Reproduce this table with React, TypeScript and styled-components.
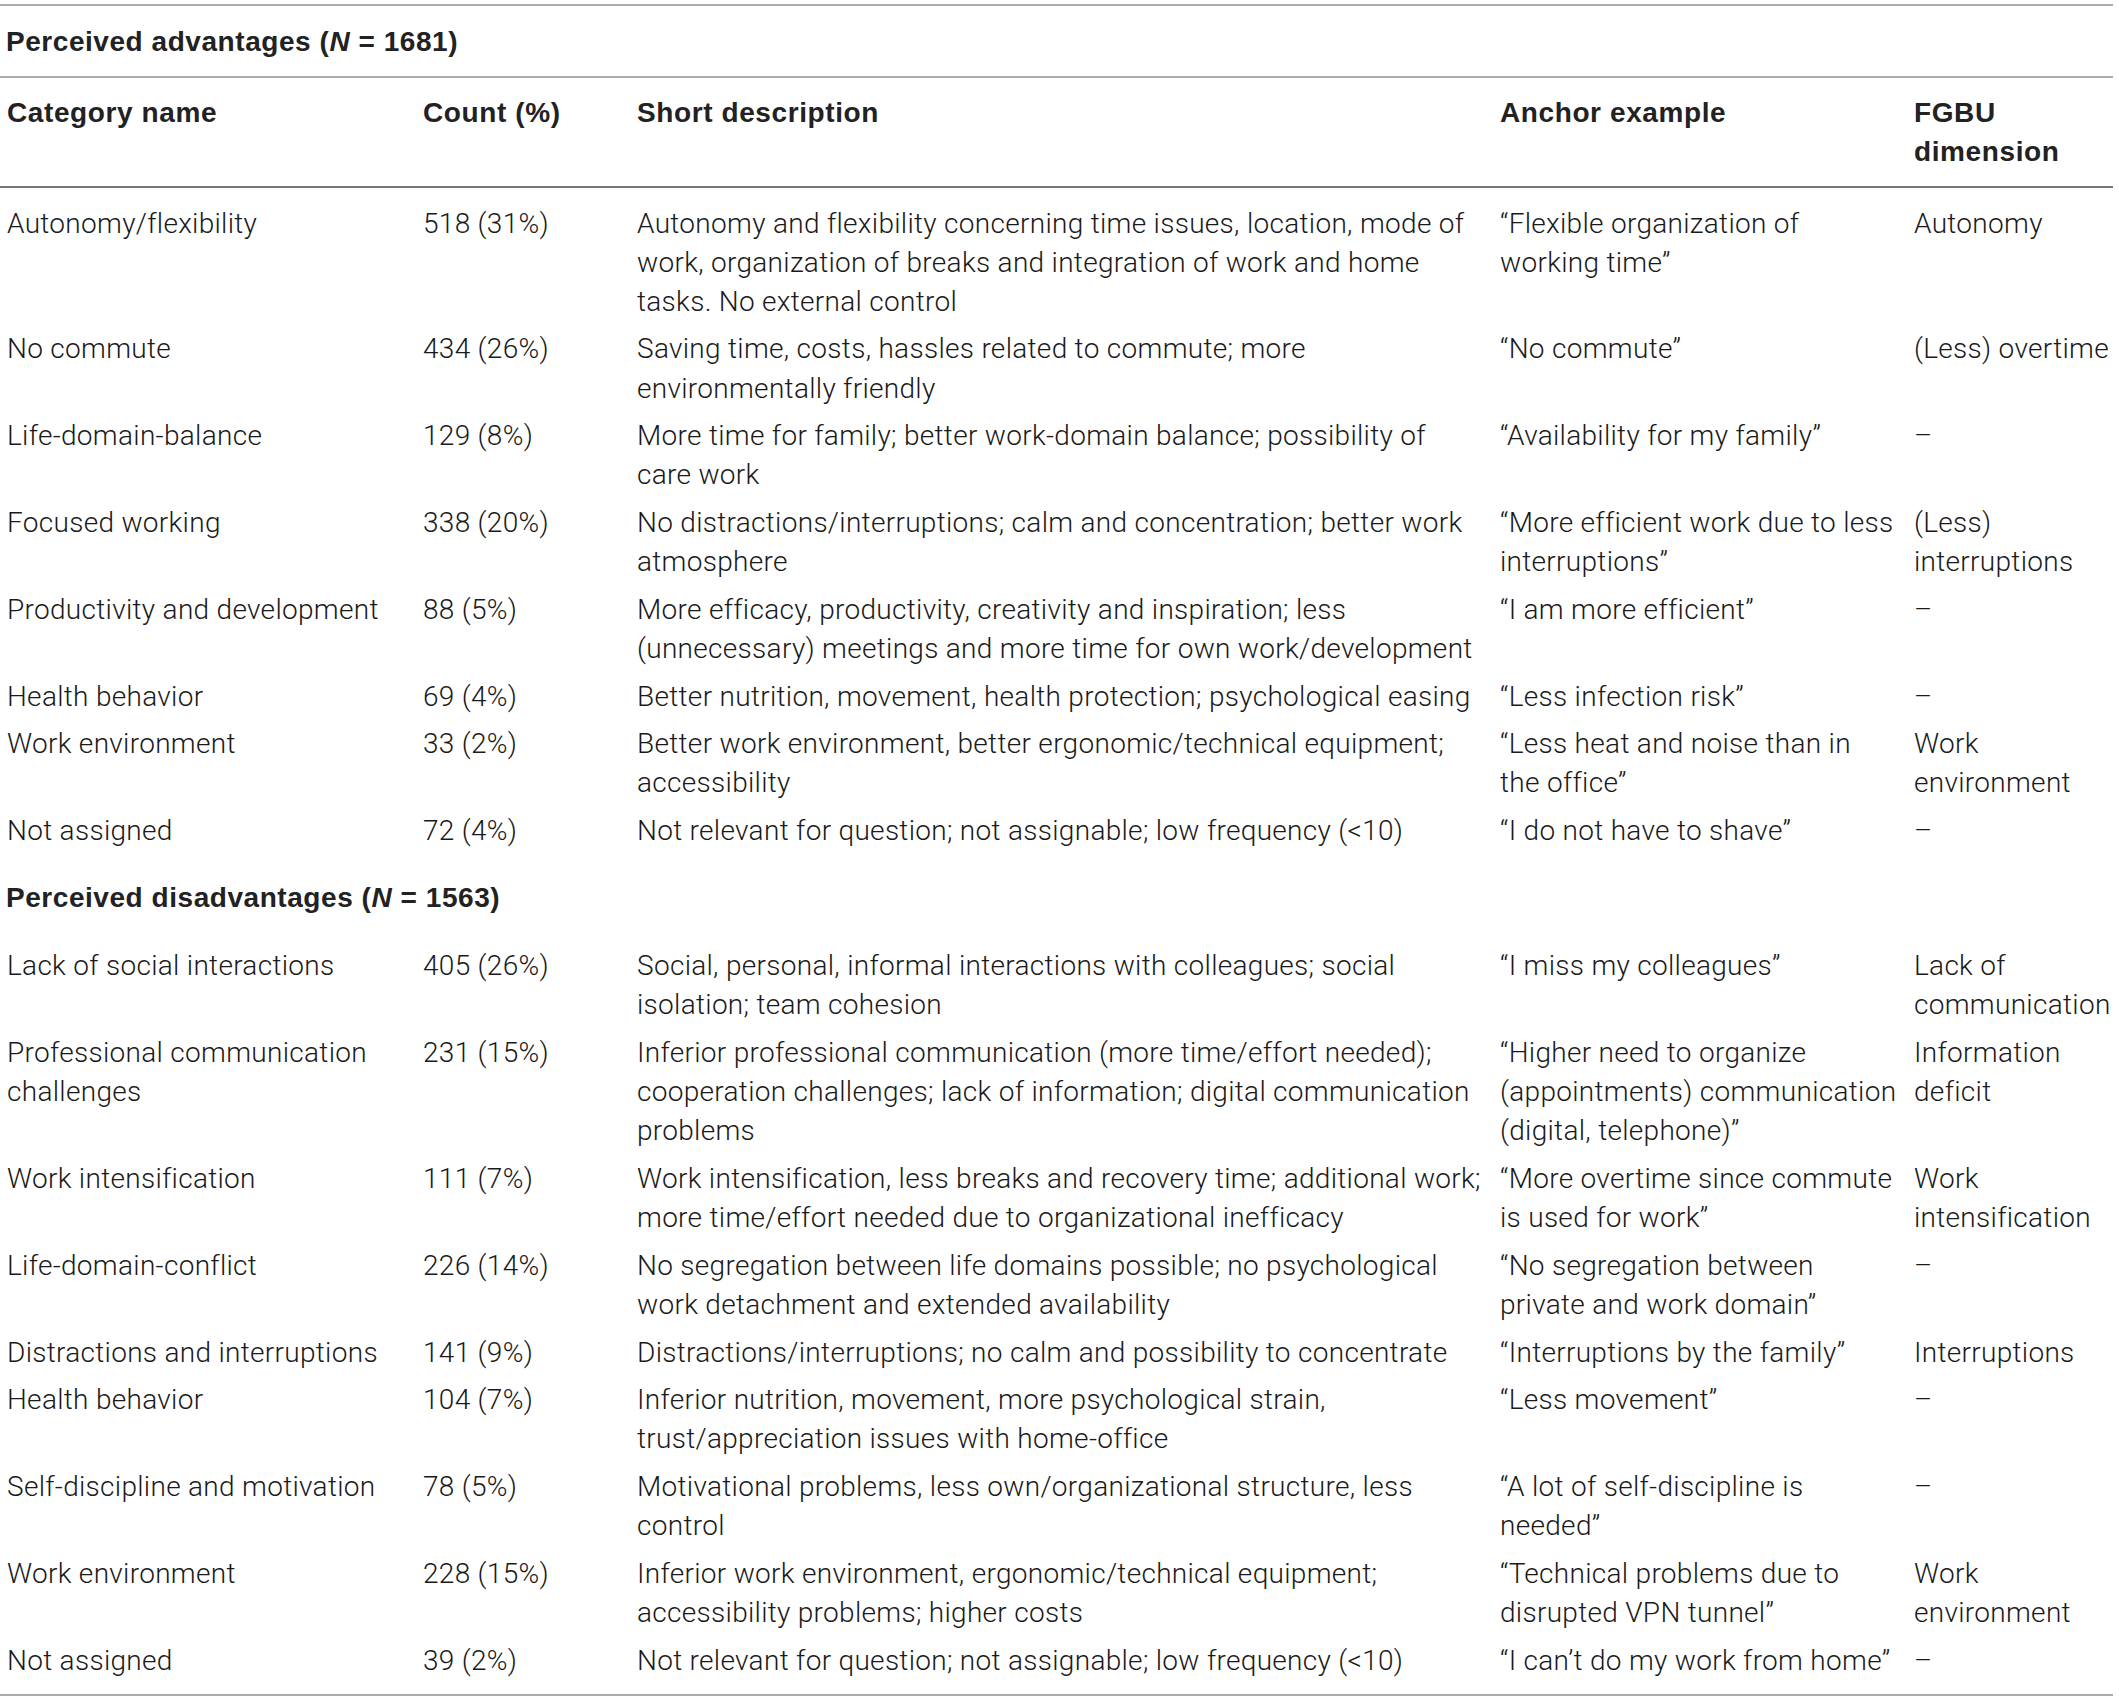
import React from "react";
import styled, { createGlobalStyle } from "styled-components";

const GlobalStyle = createGlobalStyle`
  html, body {
    margin: 0;
    padding: 0;
    background: #ffffff;
  }
  body {
    font-family: Roboto, "Liberation Sans", Arial, sans-serif;
    color: #1e1e1e;
  }
`;

const Page = styled.div`
  padding-top: 4px;
  width: 2113px;
`;

const Table = styled.div`
  display: flex;
  flex-direction: column;
  border-top: 2px solid #ababab;
  border-bottom: 2px solid #ababab;
`;

const COLS = "416px 214px 863px 414px 206px";

const BOLD_FONT = `"Liberation Sans", Arial, Helvetica, sans-serif`;

const TitleRow = styled.div<{ $ruled?: boolean; $top: number; $bottom: number }>`
  padding: ${(p) => p.$top}px 0 ${(p) => p.$bottom}px 6px;
  border-bottom: ${(p) => (p.$ruled ? "2px solid #ababab" : "none")};
  font-family: ${BOLD_FONT};
  font-weight: 700;
  font-size: 28px;
  line-height: 39.2px;
  white-space: nowrap;
  letter-spacing: 0.55px;
  color: #222;
`;

const HeaderRow = styled.div`
  display: grid;
  grid-template-columns: ${COLS};
  padding: 14.5px 0 15px;
  border-bottom: 2px solid #767676;
`;

const HeadCell = styled.div`
  padding-left: 7px;
  font-family: ${BOLD_FONT};
  font-weight: 700;
  font-size: 28px;
  line-height: 39.2px;
  white-space: nowrap;
  letter-spacing: 0.6px;
  color: #222;
`;

const DataRow = styled.div<{ $first?: boolean; $last?: boolean }>`
  display: grid;
  grid-template-columns: ${COLS};
  padding-top: ${(p) => (p.$first ? 15.4 : 4.2)}px;
  padding-bottom: ${(p) => (p.$last ? 14.5 : 4.2)}px;
`;

const Cell = styled.div`
  padding-left: 7px;
  font-weight: 300;
  font-size: 28px;
  line-height: 39.2px;
  white-space: nowrap;
  letter-spacing: 0.3px;
  color: #1a1a1a;
`;

type Row = {
  name: string[];
  count: string;
  desc: string[];
  anchor: string[];
  dim: string[];
};

const advantages: Row[] = [
  {
    name: ["Autonomy/flexibility"],
    count: "518 (31%)",
    desc: [
      "Autonomy and flexibility concerning time issues, location, mode of",
      "work, organization of breaks and integration of work and home",
      "tasks. No external control",
    ],
    anchor: ["\u201CFlexible organization of", "working time\u201D"],
    dim: ["Autonomy"],
  },
  {
    name: ["No commute"],
    count: "434 (26%)",
    desc: ["Saving time, costs, hassles related to commute; more", "environmentally friendly"],
    anchor: ["\u201CNo commute\u201D"],
    dim: ["(Less) overtime"],
  },
  {
    name: ["Life-domain-balance"],
    count: "129 (8%)",
    desc: ["More time for family; better work-domain balance; possibility of", "care work"],
    anchor: ["\u201CAvailability for my family\u201D"],
    dim: ["\u2013"],
  },
  {
    name: ["Focused working"],
    count: "338 (20%)",
    desc: ["No distractions/interruptions; calm and concentration; better work", "atmosphere"],
    anchor: ["\u201CMore efficient work due to less", "interruptions\u201D"],
    dim: ["(Less)", "interruptions"],
  },
  {
    name: ["Productivity and development"],
    count: "88 (5%)",
    desc: [
      "More efficacy, productivity, creativity and inspiration; less",
      "(unnecessary) meetings and more time for own work/development",
    ],
    anchor: ["\u201CI am more efficient\u201D"],
    dim: ["\u2013"],
  },
  {
    name: ["Health behavior"],
    count: "69 (4%)",
    desc: ["Better nutrition, movement, health protection; psychological easing"],
    anchor: ["\u201CLess infection risk\u201D"],
    dim: ["\u2013"],
  },
  {
    name: ["Work environment"],
    count: "33 (2%)",
    desc: ["Better work environment, better ergonomic/technical equipment;", "accessibility"],
    anchor: ["\u201CLess heat and noise than in", "the office\u201D"],
    dim: ["Work", "environment"],
  },
  {
    name: ["Not assigned"],
    count: "72 (4%)",
    desc: ["Not relevant for question; not assignable; low frequency (<10)"],
    anchor: ["\u201CI do not have to shave\u201D"],
    dim: ["\u2013"],
  },
];

const disadvantages: Row[] = [
  {
    name: ["Lack of social interactions"],
    count: "405 (26%)",
    desc: ["Social, personal, informal interactions with colleagues; social", "isolation; team cohesion"],
    anchor: ["\u201CI miss my colleagues\u201D"],
    dim: ["Lack of", "communication"],
  },
  {
    name: ["Professional communication", "challenges"],
    count: "231 (15%)",
    desc: [
      "Inferior professional communication (more time/effort needed);",
      "cooperation challenges; lack of information; digital communication",
      "problems",
    ],
    anchor: ["\u201CHigher need to organize", "(appointments) communication", "(digital, telephone)\u201D"],
    dim: ["Information", "deficit"],
  },
  {
    name: ["Work intensification"],
    count: "111 (7%)",
    desc: [
      "Work intensification, less breaks and recovery time; additional work;",
      "more time/effort needed due to organizational inefficacy",
    ],
    anchor: ["\u201CMore overtime since commute", "is used for work\u201D"],
    dim: ["Work", "intensification"],
  },
  {
    name: ["Life-domain-conflict"],
    count: "226 (14%)",
    desc: [
      "No segregation between life domains possible; no psychological",
      "work detachment and extended availability",
    ],
    anchor: ["\u201CNo segregation between", "private and work domain\u201D"],
    dim: ["\u2013"],
  },
  {
    name: ["Distractions and interruptions"],
    count: "141 (9%)",
    desc: ["Distractions/interruptions; no calm and possibility to concentrate"],
    anchor: ["\u201CInterruptions by the family\u201D"],
    dim: ["Interruptions"],
  },
  {
    name: ["Health behavior"],
    count: "104 (7%)",
    desc: ["Inferior nutrition, movement, more psychological strain,", "trust/appreciation issues with home-office"],
    anchor: ["\u201CLess movement\u201D"],
    dim: ["\u2013"],
  },
  {
    name: ["Self-discipline and motivation"],
    count: "78 (5%)",
    desc: ["Motivational problems, less own/organizational structure, less", "control"],
    anchor: ["\u201CA lot of self-discipline is", "needed\u201D"],
    dim: ["\u2013"],
  },
  {
    name: ["Work environment"],
    count: "228 (15%)",
    desc: ["Inferior work environment, ergonomic/technical equipment;", "accessibility problems; higher costs"],
    anchor: ["\u201CTechnical problems due to", "disrupted VPN tunnel\u201D"],
    dim: ["Work", "environment"],
  },
  {
    name: ["Not assigned"],
    count: "39 (2%)",
    desc: ["Not relevant for question; not assignable; low frequency (<10)"],
    anchor: ["\u201CI can\u2019t do my work from home\u201D"],
    dim: ["\u2013"],
  },
];

const Lines: React.FC<{ lines: string[] }> = ({ lines }) => (
  <>
    {lines.map((l, i) => (
      <React.Fragment key={i}>
        {i > 0 && <br />}
        {l}
      </React.Fragment>
    ))}
  </>
);

const Section: React.FC<{ rows: Row[] }> = ({ rows }) => (
  <>
    {rows.map((r, i) => (
      <DataRow key={i} $first={i === 0} $last={i === rows.length - 1}>
        <Cell>
          <Lines lines={r.name} />
        </Cell>
        <Cell>{r.count}</Cell>
        <Cell>
          <Lines lines={r.desc} />
        </Cell>
        <Cell>
          <Lines lines={r.anchor} />
        </Cell>
        <Cell>
          <Lines lines={r.dim} />
        </Cell>
      </DataRow>
    ))}
  </>
);

export default function App() {
  return (
    <Page>
      <GlobalStyle />
      <Table>
        <TitleRow $ruled $top={16} $bottom={15}>
          Perceived advantages (<i>N</i> = 1681)
        </TitleRow>
        <HeaderRow>
          <HeadCell>Category name</HeadCell>
          <HeadCell>Count (%)</HeadCell>
          <HeadCell>Short description</HeadCell>
          <HeadCell>Anchor example</HeadCell>
          <HeadCell>
            FGBU
            <br />
            dimension
          </HeadCell>
        </HeaderRow>
        <Section rows={advantages} />
        <TitleRow $top={13} $bottom={14}>
          Perceived disadvantages (<i>N</i> = 1563)
        </TitleRow>
        <Section rows={disadvantages} />
      </Table>
    </Page>
  );
}
